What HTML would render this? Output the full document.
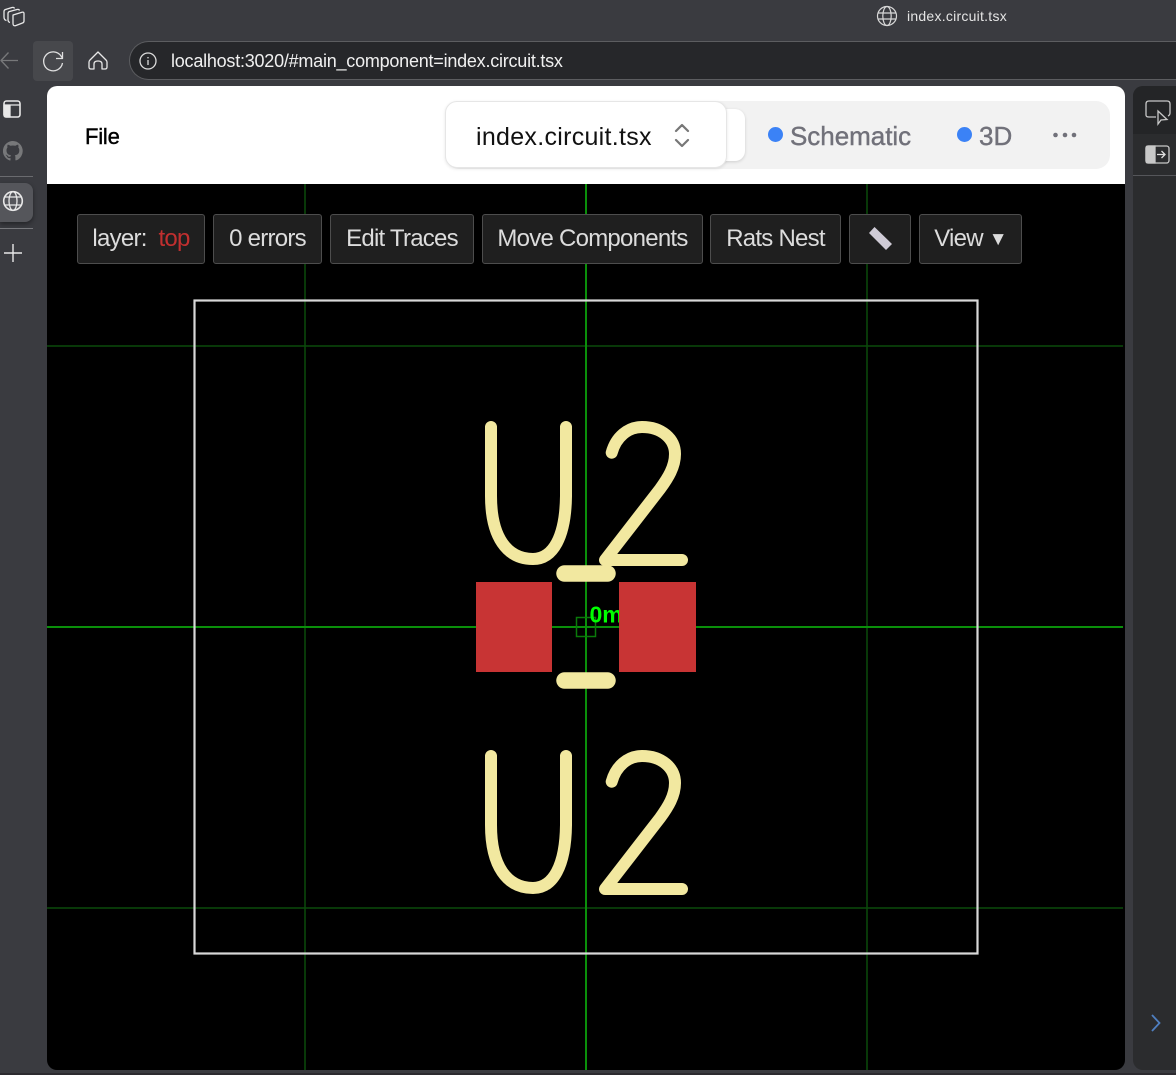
<!DOCTYPE html>
<html><head><meta charset="utf-8">
<style>
html,body{margin:0;padding:0;width:1176px;height:1075px;overflow:hidden;background:#3a3b40;font-family:"Liberation Sans",sans-serif}
.a{position:absolute;white-space:nowrap}
.btn{position:absolute;top:214px;height:48px;background:#1f1f1f;border:1px solid #4d4d4d;border-radius:3px;color:#dcdcdc;font-size:24px;line-height:47px;text-align:center;letter-spacing:-.75px;box-sizing:content-box}
</style></head>
<body>
<!-- toolbar -->
<div class="a" style="left:129px;top:41px;width:1060px;height:39px;box-sizing:border-box;background:#26272a;border:1px solid #5c5d60;border-right:0;border-radius:20px 0 0 20px"></div>
<div class="a" style="left:33px;top:41px;width:40px;height:40px;background:#47484c;border-radius:4px"></div>
<div class="a" style="left:0;top:183px;width:33px;height:39px;background:#55565b;border-radius:0 8px 8px 0;box-shadow:0 2px 5px rgba(0,0,0,.4)"></div>
<div class="a" style="left:0;top:176px;width:33px;height:1px;background:#6a6b6f"></div>
<div class="a" style="left:0;top:228px;width:33px;height:1px;background:#77787c"></div>
<svg class="a" style="left:0;top:0" width="130" height="270" fill="none" stroke="#e8e8e8" stroke-width="1.300" stroke-linejoin="round">
  <path d="M13 15L22 12.200Q24 11.700 24 13.500V21Q24 22.500 22.500 23L16 25.500Q13 26.500 13 23.500Z"/>
  <path d="M10 22.500Q8 22 8 19.500V13.500Q8 12 9.500 11.500L17 9.500Q19 9 19.500 10.500"/>
  <path d="M6.500 20.500Q4 20 4 17V11.500Q4 10 5.500 9.500L12 7.500Q14 7 14.500 8.500"/>
  <path d="M18 60.500H1M8.500 52.500L1 60.500L8.500 68.500" stroke="#77787a"/>
  <path d="M62.500 63a9.500 9.500 0 1 1-1.500-7l1 1.500M62.500 52v6.500h-6.500" stroke="#e0e0e0"/>
  <path d="M90 60l8-8 8 8q1 1 1 2v5q0 2-2 2h-3v-5q0-3-4-3t-4 3v5h-3q-2 0-2-2v-5q0-1 1-2z"/>
  <rect x="4" y="101" width="16" height="16" rx="2.500" stroke-width="1.600"/><path d="M4 105h16M4 105h6v12H6q-2 0-2-2z" fill="#e8e8e8"/>
  <circle cx="13" cy="201" r="9.300" stroke-width="1.600"/><ellipse cx="13" cy="201" rx="4" ry="9.300"/><path d="M4.500 197h17M4.500 205h17"/>
  <path d="M13 244v18M4 253h18" stroke-width="1.400"/>
</svg>
<svg class="a" style="left:139px;top:52px" width="18" height="18" fill="none" stroke="#dcdcdc" stroke-width="1.300"><circle cx="9" cy="9" r="8"/><path d="M9 8v5M9 5v1.400"/></svg>
<svg class="a" style="left:3px;top:141px" width="20" height="20"><path fill="#77787a" d="M10 0a10 10 0 0 0-3.200 19.500c.5.1.7-.2.7-.5v-2c-2.800.6-3.400-1.200-3.400-1.200-.5-1.200-1.100-1.500-1.100-1.500-.9-.6.1-.6.1-.6 1 .1 1.500 1 1.500 1 .9 1.500 2.300 1.100 2.900.8.1-.6.3-1.100.6-1.300-2.200-.3-4.600-1.100-4.600-5 0-1.100.4-2 1-2.700-.1-.3-.4-1.300.1-2.700 0 0 .8-.3 2.800 1a9.600 9.600 0 0 1 5 0c1.900-1.300 2.800-1 2.800-1 .5 1.400.2 2.400.1 2.700.6.7 1 1.600 1 2.700 0 3.900-2.300 4.700-4.600 5 .4.300.7.900.7 1.900v2.800c0 .3.2.600.7.500A10 10 0 0 0 10 0z"/></svg>
<svg class="a" style="left:876px;top:5px" width="22" height="22" fill="none" stroke="#d8d8d8" stroke-width="1.200"><circle cx="11" cy="11" r="9.500"/><ellipse cx="11" cy="11" rx="4.200" ry="9.500"/><path d="M2 8h18M2 14h18"/></svg>
<div class="a" style="left:907px;top:8px;font-size:14px;line-height:17px;color:#e4e4e4;letter-spacing:.25px">index.circuit.tsx</div>
<div class="a" style="left:171px;top:51px;font-size:18px;line-height:21px;color:#f0f0f0;letter-spacing:-.23px">localhost:3020/#main_component=index.circuit.tsx</div>

<!-- right panel -->
<div class="a" style="left:1133px;top:86px;width:43px;height:984px;background:#2b2c2e;border-radius:10px 0 0 10px"></div>
<div class="a" style="left:1133px;top:86px;width:43px;height:48px;background:#242527;border-radius:10px 0 0 0"></div>
<div class="a" style="left:1133px;top:175px;width:43px;height:1px;background:#55565a"></div>
<svg class="a" style="left:1140px;top:95px" width="36" height="75" fill="none" stroke="#c8c8c8" stroke-width="1.300">
  <path d="M16 22H9q-3 0-3-2V9q0-3 3-3h18q3 0 3 3v9q0 2-2 3"/><path d="M18 16v13l3-4 6-.500z" fill="#242527"/>
  <rect x="6" y="51" width="23" height="17" rx="2.500"/><path d="M6 53q0-2 2-2h7v17H8q-2 0-2-2z" fill="#c8c8c8"/><path d="M17 59.500h8M21.500 56l3.500 3.500-3.500 3.500" stroke="#e0e0e0"/>
</svg>
<svg class="a" style="left:1150px;top:1014px" width="14" height="18" fill="none" stroke="#4f7fc0" stroke-width="1.800"><path d="M2 1l7.500 8L2 17"/></svg>

<!-- main page -->
<div class="a" style="left:47px;top:86px;width:1078px;height:984px;background:#000;border-radius:10px;overflow:hidden">
  <div class="a" style="left:0;top:0;width:1078px;height:98px;background:#fff"></div>
</div>
<div class="a" style="left:85px;top:124px;font-size:22px;line-height:26px;color:#000;letter-spacing:-.2px;-webkit-text-stroke:.4px #000">File</div>
<div class="a" style="left:445px;top:101px;width:665px;height:68px;background:#f2f2f2;border-radius:14px"></div>
<div class="a" style="left:700px;top:109px;width:45px;height:52px;background:#fff;border-radius:10px;box-shadow:0 1px 3px rgba(0,0,0,.15)"></div>
<div class="a" style="left:445px;top:101px;width:282px;height:67px;box-sizing:border-box;background:#fff;border:1px solid #e6e6e6;border-radius:12px;box-shadow:0 1px 3px rgba(0,0,0,.1)"></div>
<div class="a" style="left:476px;top:122px;font-size:25px;line-height:30px;color:#111;letter-spacing:.29px">index.circuit.tsx</div>
<svg class="a" style="left:672px;top:122px" width="20" height="28" fill="none" stroke="#777" stroke-width="2.200" stroke-linecap="round" stroke-linejoin="round"><path d="M4 9l6-6 6 6M4 18l6 6 6-6"/></svg>
<div class="a" style="left:768px;top:127px;width:15px;height:15px;border-radius:50%;background:#3b82f6"></div>
<div class="a" style="left:790px;top:121px;font-size:26px;line-height:31px;color:#71717a;letter-spacing:-.03px;-webkit-text-stroke:.4px #71717a">Schematic</div>
<div class="a" style="left:957px;top:127px;width:15px;height:15px;border-radius:50%;background:#3b82f6"></div>
<div class="a" style="left:979px;top:121px;font-size:26px;line-height:31px;color:#71717a;-webkit-text-stroke:.4px #71717a">3D</div>
<svg class="a" style="left:1052px;top:130px" width="26" height="10" fill="#71717a"><circle cx="3.500" cy="5" r="2.300"/><circle cx="13" cy="5" r="2.300"/><circle cx="22" cy="5" r="2.300"/></svg>

<!-- pcb -->
<svg class="a" style="left:47px;top:184px" width="1076" height="886" viewBox="47 184 1076 886" fill="none" font-family="Liberation Sans, sans-serif">
  <g stroke="#0b4a0b" stroke-width="1.500">
    <path d="M305 184V1070M867 184V1070M47 346H1123M47 908H1123"/>
  </g>
  <path d="M586 184V1070M47 627H1123" stroke="#0a8f0a" stroke-width="2"/>
  <rect x="194.500" y="300.500" width="783" height="653" stroke="#d8d8d8" stroke-width="2.200"/>
  <rect x="476" y="582" width="76" height="90" fill="#c83434"/>
  <rect x="576.500" y="617.500" width="19" height="19" stroke="#0a7a0a" stroke-width="1.500"/>
  <text x="589.500" y="622.500" font-size="23" font-weight="700" fill="#00ff00">0m</text>
  <rect x="619" y="582" width="77" height="90" fill="#c83434"/>
  <g stroke="#f2e8a0" stroke-linecap="round" stroke-linejoin="round" stroke-width="12" style="filter:blur(.3px)">
    <path d="M491 427V496C491 537 507 559 533 559C553 559 565.500 537 566 496V427"/>
    <path d="M611.700 452.700C616 437 628 427 642 427C662 427 675 439 675 454C675 467 668 478 660 489L605 560H682"/>
    <path d="M491 756V825C491 866 507 888 533 888C553 888 565.500 866 566 825V756"/>
    <path d="M611.700 781.700C616 766 628 756 642 756C662 756 675 768 675 783C675 796 668 807 660 818L605 889H682"/>
    <path stroke-width="16.500" d="M564.500 573.500H607.500M564.500 680.500H607.500"/>
  </g>
</svg>

<!-- toolbar buttons -->
<div class="btn" style="left:77px;width:126px"><span>layer:</span>&nbsp; <span style="color:#c02f2f">top</span></div>
<div class="btn" style="left:213px;width:107px">0 errors</div>
<div class="btn" style="left:330px;width:142px">Edit Traces</div>
<div class="btn" style="left:482px;width:219px">Move Components</div>
<div class="btn" style="left:710px;width:129px">Rats Nest</div>
<div class="btn" style="left:849px;width:60px"></div>
<svg class="a" style="left:867px;top:225px" width="26" height="26"><path d="M2 8L7.500 2 25 19 19 25z" fill="#cfcbd6"/></svg>
<div class="btn" style="left:919px;width:101px">View <span style="font-size:19px;vertical-align:1px">▼</span></div>
<div class="a" style="left:0;top:1073px;width:1176px;height:2px;background:#2c2a2f"></div>
</body></html>
